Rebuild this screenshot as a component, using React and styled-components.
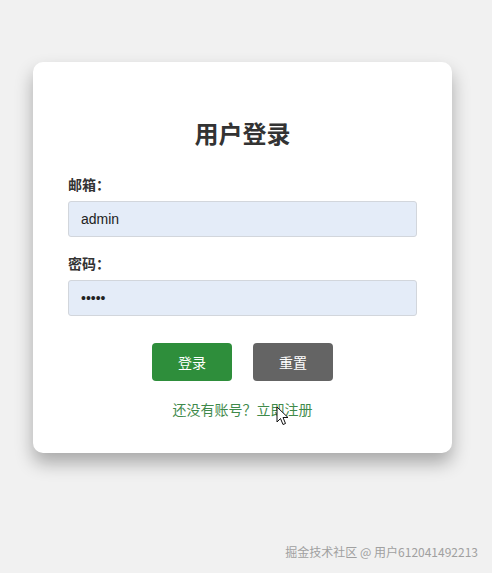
import React from 'react';
import styled, { createGlobalStyle } from 'styled-components';

const GlobalStyle = createGlobalStyle`
  html, body {
    margin: 0;
    padding: 0;
    background: #f1f1f1;
    font-family: "Liberation Sans", Arial, "Noto Sans CJK SC", sans-serif;
  }
`;

const Page = styled.div`
  position: relative;
  min-height: 573px;
  padding-top: 62px;
  box-sizing: border-box;
`;

const Card = styled.div`
  width: 419px;
  margin-left: 33px;
  box-sizing: border-box;
  padding: 57px 35px 33px;
  background: #fff;
  border-radius: 10px;
  box-shadow: 0 10px 18px rgba(0, 0, 0, 0.3);
`;

const Title = styled.h2`
  margin: 0 0 24px;
  text-align: center;
  font-size: 24px;
  line-height: 32px;
  font-weight: 700;
  color: #333;
`;

const Field = styled.div`
  display: flex;
  flex-direction: column;
  margin-bottom: ${props => props.last ? '27px' : '17px'};
`;

const Label = styled.label`
  font-size: 14px;
  line-height: 20px;
  font-weight: 700;
  color: #333;
  margin-bottom: 6px;
`;

const Input = styled.input`
  height: 36px;
  box-sizing: border-box;
  padding: 0 12px;
  border: 1px solid #d2d6dc;
  border-radius: 3px;
  background: #e4ecf8;
  font-family: "Liberation Sans", Arial, sans-serif;
  font-size: 14px;
  color: #222;
  outline: none;
`;

const Actions = styled.div`
  display: flex;
  justify-content: center;
  gap: 21px;
  margin-bottom: 19px;
`;

const Button = styled.button`
  width: 80px;
  height: 38px;
  border: none;
  border-radius: 4px;
  background: ${props => props.variant === 'reset' ? '#646464' : '#2e8e3b'};
  color: #fff;
  font-family: "Liberation Sans", "Noto Sans CJK SC", sans-serif;
  font-size: 14px;
  cursor: pointer;
`;

const RegisterLink = styled.a`
  display: block;
  text-align: center;
  font-size: 14px;
  line-height: 20px;
  color: #3f8a4b;
  text-decoration: none;
`;

const Watermark = styled.div`
  position: absolute;
  right: 14px;
  bottom: 13px;
  font-size: 12px;
  color: #a0a0a0;
  font-family: "Noto Sans CJK SC", sans-serif;
`;

const Cursor = styled.svg`
  position: absolute;
  left: 276px;
  top: 406px;
`;

export default function App() {
  return (
    <>
      <GlobalStyle />
      <Page>
        <Card>
          <Title>用户登录</Title>
          <Field>
            <Label>邮箱：</Label>
            <Input type="text" defaultValue="admin" readOnly />
          </Field>
          <Field last>
            <Label>密码：</Label>
            <Input type="password" defaultValue="admin" readOnly />
          </Field>
          <Actions>
            <Button>登录</Button>
            <Button variant="reset">重置</Button>
          </Actions>
          <RegisterLink href="#">还没有账号？立即注册</RegisterLink>
        </Card>
        <Cursor width="13" height="20" viewBox="0 0 13 20">
          <path d="M1 1 L1 16 L4.5 12.5 L7 18.5 L9.5 17.5 L7 11.5 L12 11.5 Z" fill="#fff" stroke="#111" strokeWidth="1" strokeLinejoin="round" />
        </Cursor>
        <Watermark>掘金技术社区 @ 用户612041492213</Watermark>
      </Page>
    </>
  );
}
